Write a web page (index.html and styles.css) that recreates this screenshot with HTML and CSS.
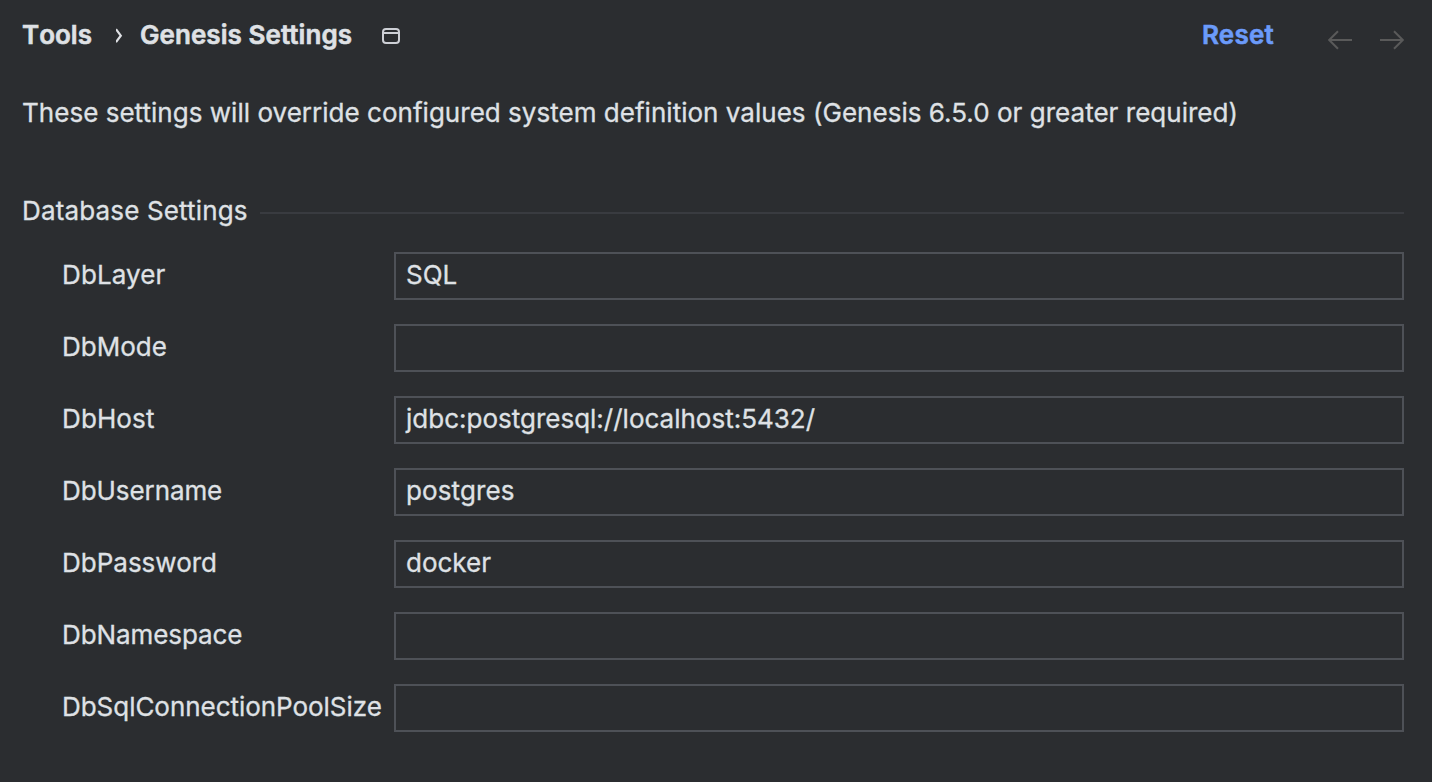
FILE: index.html
```html
<!DOCTYPE html>
<html lang="en">
<head>
<meta charset="utf-8">
<title>Genesis Settings</title>
<link rel="stylesheet" href="styles.css">
</head>
<body>
<main class="panel">
  <header class="header">
    <span class="crumb crumb-root">Tools</span>
    <svg class="chevron" width="8" height="16" viewBox="0 0 8 16"><path d="M0 1.2L4.8 7.7L0 14.2"/></svg>
    <span class="crumb crumb-page">Genesis Settings</span>
    <svg class="window" width="18" height="16" viewBox="0 0 18 16"><rect x="1" y="1" width="16" height="14" rx="3"/><path d="M1 5H17"/></svg>
    <a class="reset">Reset</a>
    <svg class="arrow" width="24" height="20" viewBox="0 0 24 20"><path d="M24 10H1.2M10 1.2L1.2 10L10 18.8"/></svg>
    <svg class="arrow arrow-next" width="24" height="20" viewBox="0 0 24 20"><path d="M0 10H22.8M14 1.2L22.8 10L14 18.8"/></svg>
  </header>
  <p class="note"><span class="note-text">These settings will override configured system definition values (Genesis 6.5.0 or greater required)</span></p>
  <section class="group">
    <h2 class="group-title"><span class="group-text">Database Settings</span></h2>
    <div class="form">
      <div class="row"><span class="label l-layer">DbLayer</span><div class="field">SQL</div></div>
      <div class="row"><span class="label">DbMode</span><div class="field"></div></div>
      <div class="row"><span class="label l-host">DbHost</span><div class="field">jdbc:postgresql://localhost:5432/</div></div>
      <div class="row"><span class="label l-user">DbUsername</span><div class="field v-user">postgres</div></div>
      <div class="row"><span class="label">DbPassword</span><div class="field">docker</div></div>
      <div class="row"><span class="label l-space">DbNamespace</span><div class="field"></div></div>
      <div class="row"><span class="label l-pool">DbSqlConnectionPoolSize</span><div class="field"></div></div>
    </div>
  </section>
</main>
</body>
</html>
```
FILE: styles.css
```css
* { box-sizing: border-box; }
body {
  margin: 0;
  background: #2b2d30;
  color: #dfe1e5;
  font: 400 26px/32px Inter, "Liberation Sans", sans-serif;
  -webkit-text-stroke: 0.3px;
  white-space: nowrap;
}
.panel { height: 782px; padding: 19px 28px 0 22px; overflow: hidden; }
svg { fill: none; stroke: #dfe1e5; stroke-width: 2; flex: none; }
.header { display: flex; height: 32px; align-items: flex-start; }
.crumb, .reset { font-weight: 600; -webkit-text-stroke: 0.6px; }
.crumb-root { width: 94px; font-kerning: none; }
.chevron { margin-top: 9px; width: 8px; overflow: hidden; stroke-width: 2.2; }
.crumb-page { width: 242px; margin-left: 16px; letter-spacing: 0.06px; }
.window { margin-top: 9px; stroke: #ced0d6; }
.reset { width: 126px; margin-left: auto; color: #6b9bfa; letter-spacing: 0.2px; }
.arrow { margin-top: 11px; stroke: #5a5a5a; }
.arrow-next { margin-left: 28px; }
.note { margin: 46px 0 0; letter-spacing: 0.025px; }
.group { margin-top: 66px; }
.group-title { display: flex; align-items: center; margin: 0; font: inherit; }
.group-text { width: 238px; letter-spacing: 0.15px; }
.group-title::after { content: ""; flex: 1; height: 2px; margin-top: 4px; background: #393b40; }
.form { display: flex; flex-direction: column; gap: 24px; margin: 25px 0 0 40px; }
.row { display: grid; grid-template-columns: 332px 1fr; height: 48px; }
.label { padding-top: 7px; }
.l-layer, .l-host { letter-spacing: 0.12px; }
.l-user, .l-space { letter-spacing: -0.08px; }
.l-pool { letter-spacing: -0.04px; }
.field { padding: 5px 10px; border: 2px solid #4e5157; }
.v-user { letter-spacing: 0.12px; }
```
